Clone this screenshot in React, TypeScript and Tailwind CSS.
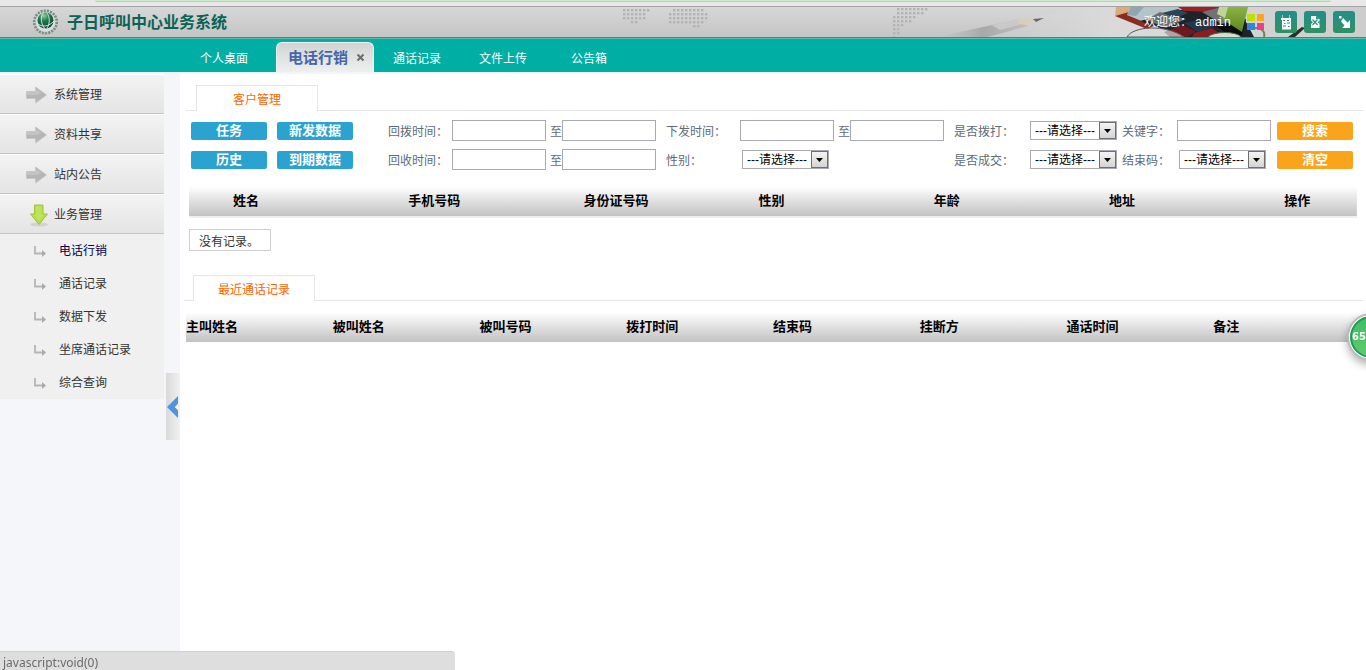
import React, { useState } from 'react';

const uiFont = 'font-["Liberation_Sans","Noto_Sans_CJK_SC",sans-serif]';

const menuItems = [
  { id: 'system', label: '系统管理' },
  { id: 'share', label: '资料共享' },
  { id: 'notice', label: '站内公告' },
  { id: 'business', label: '业务管理' },
];

const subItems = ['电话行销', '通话记录', '数据下发', '坐席通话记录', '综合查询'];

const customerColumns = ['姓名', '手机号码', '身份证号码', '性别', '年龄', '地址', '操作'];

const callColumns = ['主叫姓名', '被叫姓名', '被叫号码', '拨打时间', '结束码', '挂断方', '通话时间', '备注'];

// each row is [first column, number of dots]
const mapDots = [
  { x: 27, y: 2, rows: [[0, 7], [0, 6], [0, 6], [2, 2]] },
  { x: 73, y: 2, rows: [[1, 8], [0, 10], [0, 10], [0, 9], [6, 2]] },
  { x: 297, y: 1, rows: [[1, 8], [1, 7], [0, 6], [0, 5], [0, 3], [0, 2], [0, 2], [0, 1]] },
];

const Logo: React.FC = () => (
  <svg width="27" height="28" viewBox="0 0 27 28" aria-hidden="true">
    <defs>
      <radialGradient id="globe" cx="0.4" cy="0.2" r="0.85">
        <stop offset="0" stopColor="#8fd09b" />
        <stop offset="0.4" stopColor="#1d7a4b" />
        <stop offset="1" stopColor="#03402f" />
      </radialGradient>
    </defs>
    <circle cx="13.5" cy="14" r="11.3" fill="none" stroke="#7b8a82" strokeWidth="2.600" strokeDasharray="2 1.200" />
    <circle cx="13.5" cy="14" r="9.600" fill="#d9dedb" />
    <circle cx="13.5" cy="12.500" r="8" fill="url(#globe)" />
    <path d="M11 5C8 10 9 17 14 22M5 15C10 20 17 18.500 22 13M15 5C18 9 18 16 15 20" fill="none" stroke="#e4efe7" strokeWidth="0.9" />
  </svg>
);

const BannerArt: React.FC = () => (
  <svg className="absolute right-0 top-0" width="770" height="30" viewBox="0 0 770 30" aria-hidden="true">
    <defs>
      <linearGradient id="pencil" x1="0" x2="1">
        <stop offset="0" stopColor="#bcbcbc" stopOpacity="0" />
        <stop offset="0.5" stopColor="#a8a8a8" />
        <stop offset="1" stopColor="#c0c0c0" />
      </linearGradient>
      <linearGradient id="paper" x1="0" x2="1">
        <stop offset="0" stopColor="#d0d0d0" stopOpacity="0" />
        <stop offset="0.4" stopColor="#dadada" />
        <stop offset="1" stopColor="#cdcdcd" />
      </linearGradient>
      <linearGradient id="greenBook" x1="0" y1="0" x2="0" y2="1">
        <stop offset="0" stopColor="#8ab33f" />
        <stop offset="1" stopColor="#5a8722" />
      </linearGradient>
    </defs>
    {mapDots.map((cluster) =>
      cluster.rows.map(([start, count], row) =>
        Array.from({ length: count }, (_, i) => (
          <rect
            key={`${cluster.x}-${row}-${i}`}
            x={cluster.x + (start + i) * 4}
            y={cluster.y + row * 4}
            width="2.400"
            height="2.400"
            fill="#b3b3b3"
          />
        ))
      )
    )}
    <path d="M350 30L480 0H770V30Z" fill="url(#paper)" />
    {/* pencil */}
    <path d="M340 30L420 13L432 19L392 30Z" fill="url(#pencil)" />
    <path d="M396 18L424 12L430 16L404 23Z" fill="#c9c9c9" />
    <path d="M421 13L441 11L430 18L424 17Z" fill="#dccdb9" />
    <path d="M437 12L448 11L440 15Z" fill="#666b72" />
    {/* blocks */}
    <path d="M520 0H536L531 7L519 9Z" fill="#d8ad79" />
    <path d="M519 9L533 5L560 18L551 22Z" fill="#8c2c21" />
    <path d="M535 0H592L568 12L548 15L531 8Z" fill="#b4c5ca" />
    <path d="M535 0H548L540 9L531 8Z" fill="#8fa5af" />
    <path d="M544 14L580 4L600 0H642L658 30H590Z" fill="#1d222b" />
    <path d="M550 13L564 5L590 12L570 21Z" fill="#6a6d72" />
    <path d="M582 0H627L622 5L588 4Z" fill="#a01f25" />
    <path d="M566 6L582 2L592 6L580 11Z" fill="#2b4557" />
    <path d="M606 5L622 1L646 10L626 17Z" fill="#6f7277" />
    <path d="M568 25L586 18L600 24L592 30H574Z" fill="#6e1820" />
    <path d="M588 16L606 12L622 18L602 25Z" fill="#24374a" />
    <path d="M598 26L616 21L628 30H596Z" fill="#8b1c22" />
    <path d="M620 19L650 12L646 28L636 30Z" fill="#090d0d" />
    <path d="M630 0H652L646 25L626 12Z" fill="url(#greenBook)" />
    <path d="M623 0H632L629 11L621 7Z" fill="#bfd596" />
    <path d="M531 30C537 19 570 17 588 30Z" fill="#dadada" fillOpacity="0.7" stroke="#5b5b5b" />
    <path d="M612 30C617 24 641 24 645 30" fill="#d8ddcf" stroke="#515d45" />
    <path d="M656 22C662 19 670 23 668 30" fill="none" stroke="#768452" strokeWidth="2" />
    <path d="M692 30L706 20L709 21L699 30Z" fill="#2c2c2c" />
  </svg>
);

const MenuArrow: React.FC<{ open: boolean }> = ({ open }) =>
  open ? (
    <svg className="ml-7" width="22" height="24" viewBox="0 0 22 24" aria-hidden="true">
      <ellipse cx="11" cy="21.500" rx="9" ry="2" fill="#d2d2d2" />
      <path d="M6.500 2H15V11H19.500L11 21.500L2.500 11H6.500Z" fill="#b5dc4a" stroke="#9cc83b" />
      <path d="M8 3.500H13.500V12H16L11 18L6 12H8Z" fill="#c0e35e" />
    </svg>
  ) : (
    <svg className="ml-6" width="26" height="24" viewBox="0 0 26 24" aria-hidden="true">
      <path d="M2.500 8.500H11.500V4L22.500 12L11.500 20V15.500H2.500Z" fill="#b5b5b5" stroke="#c6c6c6" />
      <path d="M3 9H12V6L17 10L13 12H3Z" fill="#c4c4c4" />
    </svg>
  );

const SubArrow: React.FC = () => (
  <svg width="13" height="13" viewBox="0 0 13 13" aria-hidden="true">
    <path d="M1 2V9.500H9" fill="none" stroke="#b5b5b5" strokeWidth="1.800" />
    <path d="M8 6L12 9.500L8 13Z" fill="#aaaaaa" />
  </svg>
);

const FieldLabel: React.FC<{ htmlFor: string; text: string }> = ({ htmlFor, text }) => (
  <label htmlFor={htmlFor} className="pt-[2px] leading-4">{text}</label>
);

const TextInput: React.FC<{ id: string }> = ({ id }) => (
  <input id={id} type="text" className="h-[21px] w-[94px] border border-[#a9a9b1] bg-white px-1 text-black" />
);

const DateRange: React.FC<{ id: string }> = ({ id }) => (
  <div className="flex items-center">
    <TextInput id={`${id}-from`} />
    <label htmlFor={`${id}-to`} className="pt-[2px] pl-1 leading-4">至</label>
    <TextInput id={`${id}-to`} />
  </div>
);

const SelectBox: React.FC<{ id: string }> = ({ id }) => (
  <div className="relative ml-[2px] h-[19px] w-[87px]">
    <select id={id} className="h-full w-full appearance-none border border-[#a9a9b1] bg-white pt-px pl-1 text-xs leading-4 text-black">
      <option>---请选择---</option>
      <option>是</option>
      <option>否</option>
    </select>
    <span className="pointer-events-none absolute right-px top-px flex h-[17px] w-[17px] items-center justify-center border border-[#6f6f6f] bg-linear-to-b from-[#f4f4f4] to-[#d4d4d4]">
      <svg width="7" height="4" viewBox="0 0 7 4" aria-hidden="true">
        <path d="M0 0H7L3.500 4Z" fill="#000" />
      </svg>
    </span>
  </div>
);

const ActionButton: React.FC<{ label: string; color: string }> = ({ label, color }) => (
  <button
    type="button"
    className={`h-[18px] w-[76px] rounded-[2px] text-[13px] leading-[18px] font-bold text-white ${color}`}
  >
    {label}
  </button>
);

const blue = 'bg-[#2ba3d0]';
const orange = 'bg-[#faa41c]';

const App: React.FC = () => {
  const [openMenu, setOpenMenu] = useState('business');
  const [collapsed, setCollapsed] = useState(false);

  return (
    <div className={`flex min-h-screen flex-col bg-white text-xs text-[#333] ${uiFont}`}>
      {/* Browser edge */}
      <div className="h-[7px] border-b border-[#a3a3a3] bg-[#e8e8e8] pr-[35px] pl-[95px]">
        <div className="h-[2px] rounded-b-sm border-b border-[#b9d0ba] bg-[#cdeacf]" />
      </div>

      {/* Banner */}
      <header className="relative flex h-[30px] items-center justify-between bg-linear-to-b from-[#d7d7d7] to-[#c5c5c5] pr-[11px] pl-8">
        <BannerArt />
        <div className="flex items-center gap-2">
          <Logo />
          <h1 className="pt-[2px] text-base leading-6 font-bold text-[#0b6355]">子日呼叫中心业务系统</h1>
        </div>
        <div className="relative flex items-center">
          <p className='mr-4 flex gap-[3px] pt-[2px] font-["Liberation_Mono","Noto_Sans_CJK_SC",monospace] text-white'>
            <span>欢迎您：</span>
            <span>admin</span>
          </p>
          <button type="button" aria-label="主题" className="mr-[11px]">
            <svg width="17" height="16" viewBox="0 0 17 16" aria-hidden="true">
              <rect width="8" height="7" fill="#bfe000" />
              <rect x="10" width="7" height="7" fill="#f9a61d" />
              <rect y="9" width="8" height="7" fill="#2f86e0" />
              <rect x="10" y="9" width="7" height="7" fill="#ee4084" />
            </svg>
          </button>
          <div className="flex gap-[7px]">
            <button type="button" aria-label="日程" className="h-[22px] w-[22px] rounded-[3px] bg-linear-to-b from-[#228f89] to-[#2f9163]">
              <svg width="22" height="22" viewBox="0 0 22 22" aria-hidden="true">
                <path d="M7.500 4V8M14.500 4V8" stroke="#9fd0c2" />
                <path d="M6 7H16V18.500H7V9H6Z" fill="#fff" />
                <path d="M8 9.500H10M12 9.500H14M9 12.500H10.500M12 12H15M8 15H11M13 15.500H14.500" stroke="#2a9077" />
              </svg>
            </button>
            <button type="button" aria-label="文档" className="h-[22px] w-[22px] rounded-[3px] bg-linear-to-b from-[#228f89] to-[#2f9163]">
              <svg width="22" height="22" viewBox="0 0 22 22" aria-hidden="true">
                <path d="M7 5H12L15.500 8V17H7Z" fill="#fff" />
                <path d="M8.500 8.500L13.500 14M13.500 8.500L8.500 14" fill="none" stroke="#2a9077" strokeWidth="1.200" />
                <path d="M7 9.500L9 11.300L7 13ZM15.500 9.500L13.500 11.300L15.500 13ZM12 5V8H15.500Z" fill="#2a9077" />
              </svg>
            </button>
            <button type="button" aria-label="退出" className="h-[22px] w-[22px] rounded-[3px] bg-linear-to-b from-[#228f89] to-[#2f9163]">
              <svg width="22" height="22" viewBox="0 0 22 22" aria-hidden="true">
                <rect x="6" y="5" width="2.500" height="2.500" fill="#fff" />
                <path d="M10 7L14.500 11.500L17 9V17H9L11.500 14.500L8 10.500Z" fill="#fff" />
              </svg>
            </button>
          </div>
        </div>
      </header>

      {/* Top navigation */}
      <nav className="flex h-[37px] items-end border-t border-b-2 border-t-[#00a597] border-b-[#f0f7f6] bg-[#00aea3] pl-[181px] text-white shadow-[inset_0_1px_0_#5dbcae]">
        <a href="#desktop" className="w-[86px] pb-[5px] text-center leading-4">个人桌面</a>
        <div className="ml-[9px] flex h-[30px] items-center gap-2 rounded-t-md border-x border-t border-[#f3f5f5] bg-linear-to-b from-[#d2d4d4] to-[#efefef] pr-2 pl-[11px]">
          <a href="#telesales" className="text-[15px] leading-5 font-bold text-[#4566a9]">电话行销</a>
          <button type="button" aria-label="关闭" className="h-[9px] w-[9px]">
            <svg width="9" height="9" viewBox="0 0 9 9" aria-hidden="true">
              <path d="M1.500 1.500L7.500 7.500M7.500 1.500L1.500 7.500" stroke="#6c6c6c" strokeWidth="2" />
            </svg>
          </button>
        </div>
        <a href="#calls" className="w-[86px] pb-[5px] text-center leading-4">通话记录</a>
        <a href="#upload" className="w-[86px] pb-[5px] text-center leading-4">文件上传</a>
        <a href="#board" className="w-[86px] pb-[5px] text-center leading-4">公告箱</a>
      </nav>

      <div className="flex flex-1">
        {/* Sidebar */}
        <aside className="flex shrink-0 gap-[2px] bg-[#f4f6f9]">
          {!collapsed && (
            <div className="w-[164px]">
              {menuItems.map((item) => (
                <div key={item.id}>
                  <button
                    type="button"
                    onClick={() => setOpenMenu(item.id)}
                    className="flex h-10 w-full items-center border-t border-b border-t-white border-b-[#c6c6c6] bg-linear-to-b from-[#f3f3f3] to-[#e4e4e4] pt-px"
                  >
                    <span className="w-[54px]">
                      <MenuArrow open={openMenu === item.id} />
                    </span>
                    {item.label}
                  </button>
                  {openMenu === item.id && (
                    <ul className="bg-[#f0f0f0]">
                      {subItems.map((sub, index) => (
                        <li key={sub} className="h-[33px]">
                          <a href="#sub" className={`flex h-full items-center gap-3 pl-[34px] ${index === 0 ? 'text-[#000050]' : ''}`}>
                            <SubArrow />
                            {sub}
                          </a>
                        </li>
                      ))}
                    </ul>
                  )}
                </div>
              ))}
            </div>
          )}
          <button
            type="button"
            aria-label="收起菜单"
            onClick={() => setCollapsed(!collapsed)}
            className="mt-[299px] flex h-[67px] w-[14px] items-center bg-linear-to-r from-[#d9d9d9] to-[#f1f1f1] pl-px"
          >
            <svg width="11" height="22" viewBox="0 0 11 22" aria-hidden="true">
              <path d="M11 0V8L8 11L11 14V22L0 11Z" fill="#4f94dc" />
              <path d="M11 8L8 11L11 14Z" fill="#fff" />
            </svg>
          </button>
        </aside>

        {/* Content */}
        <main className="min-w-0 flex-1 pt-[11px]">
          <div className="mr-[3px] ml-[6px] h-[26px] border-b border-[#e3e5ea]">
            <h2 className="ml-[10px] h-[26px] w-[122px] border border-b-0 border-[#e3e5ea] bg-white text-center leading-7 text-[#ff6600]">
              客户管理
            </h2>
          </div>

          <form className="mt-[9px] ml-[11px] grid grid-cols-[86px_111px_64px_214px_74px_214px_74px_94px_55px_100px_76px] items-center gap-y-2 text-[#5f6b78]">
            <ActionButton label="任务" color={blue} />
            <ActionButton label="新发数据" color={blue} />
            <FieldLabel htmlFor="callback-from" text="回拨时间：" />
            <DateRange id="callback" />
            <FieldLabel htmlFor="assign-from" text="下发时间：" />
            <DateRange id="assign" />
            <FieldLabel htmlFor="dialed" text="是否拨打：" />
            <SelectBox id="dialed" />
            <FieldLabel htmlFor="keyword" text="关键字：" />
            <TextInput id="keyword" />
            <ActionButton label="搜索" color={orange} />

            <ActionButton label="历史" color={blue} />
            <ActionButton label="到期数据" color={blue} />
            <FieldLabel htmlFor="recycle-from" text="回收时间：" />
            <DateRange id="recycle" />
            <FieldLabel htmlFor="gender" text="性别：" />
            <SelectBox id="gender" />
            <FieldLabel htmlFor="deal" text="是否成交：" />
            <SelectBox id="deal" />
            <FieldLabel htmlFor="end-code" text="结束码：" />
            <SelectBox id="end-code" />
            <ActionButton label="清空" color={orange} />
          </form>

          <div className="mx-[9px] mt-[11px] border-b-2 border-[#efefef]">
            <table className="w-full table-fixed">
              <thead>
                <tr className="h-[35px] bg-linear-to-b from-white from-15% to-[#c2c2c2]">
                  {customerColumns.map((column) => (
                    <th key={column} className="w-[15%] pt-1 pl-11 text-left text-[13px] leading-4 font-bold text-black last:w-[10%]">
                      {column}
                    </th>
                  ))}
                </tr>
              </thead>
            </table>
          </div>
          <p className="mt-[11px] ml-[9px] h-[22px] w-[82px] border border-[#cfcfcf] pl-[9px] leading-6">没有记录。</p>

          <div className="mt-6 mr-[3px] ml-1 h-[26px] border-b border-[#e3e5ea]">
            <h2 className="ml-[9px] h-[26px] w-[122px] border border-b-0 border-[#e3e5ea] bg-white text-center leading-7 text-[#ff6600]">
              最近通话记录
            </h2>
          </div>
          <div className="mx-[6px] mt-[6px]">
            <table className="w-full table-fixed">
              <thead>
                <tr className="h-[35px] bg-linear-to-b from-white from-15% to-[#c2c2c2]">
                  {callColumns.map((column) => (
                    <th key={column} className="pt-1 text-left text-[13px] leading-4 font-bold text-black">
                      {column}
                    </th>
                  ))}
                </tr>
              </thead>
            </table>
          </div>
        </main>
      </div>

      {/* Floating score ball */}
      <button
        type="button"
        className="fixed top-[313px] -right-[29px] h-12 w-12 rounded-full border-2 border-[#b9bcb9] bg-white p-px shadow-[0_4px_8px_rgba(0,0,0,0.3)]"
      >
        <span className='flex h-full w-full items-center rounded-full border-2 border-[#1f9a58] bg-linear-to-b from-[#3fbf63] to-[#5ccb6b] font-["DejaVu_Sans",sans-serif] text-[10px] font-bold text-white'>
          65
        </span>
      </button>

      {/* Link status */}
      <div className='fixed bottom-0 left-0 h-[19px] w-1/3 rounded-tr border-t border-[#d0d0d0] bg-[#dedede] pl-[3px] font-["Noto_Sans","Open_Sans",sans-serif] text-xs leading-[22px] text-[#6b6b6b]'>
        javascript:void(0)
      </div>
    </div>
  );
};

export default App;
